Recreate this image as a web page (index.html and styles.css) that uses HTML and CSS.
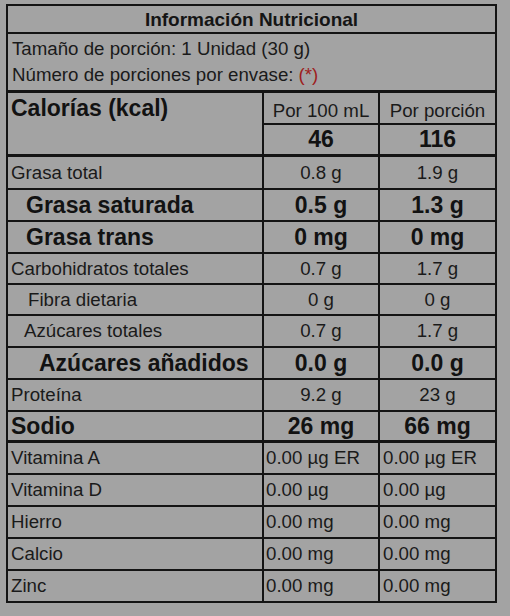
FILE: index.html
```html
<!DOCTYPE html>
<html lang="es">
<head>
<meta charset="utf-8">
<title>Información Nutricional</title>
<link rel="stylesheet" href="styles.css">
</head>
<body>
<div class="label">
  <div class="title">Información Nutricional</div>
  <div class="info">Tamaño de porción: 1 Unidad (30 g)</div>
  <div class="info last">Número de porciones por envase: <span class="red">(*)</span></div>

  <div class="cal">
    <div class="cal-name">Calorías (kcal)</div>
    <div class="head">Por 100 mL</div>
    <div class="head">Por porción</div>
    <div class="big c">46</div>
    <div class="big c">116</div>
  </div>

  <div class="row h31"><div class="n">Grasa total</div><div class="c">0.8 g</div><div class="c">1.9 g</div></div>
  <div class="row h30 big"><div class="n ind-b">Grasa saturada</div><div class="c">0.5 g</div><div class="c">1.3 g</div></div>
  <div class="row h30 big"><div class="n ind-b">Grasa trans</div><div class="c">0 mg</div><div class="c">0 mg</div></div>
  <div class="row h29"><div class="n">Carbohidratos totales</div><div class="c">0.7 g</div><div class="c">1.7 g</div></div>
  <div class="row h29"><div class="n ind-f">Fibra dietaria</div><div class="c">0 g</div><div class="c">0 g</div></div>
  <div class="row h30"><div class="n ind-a">Azúcares totales</div><div class="c">0.7 g</div><div class="c">1.7 g</div></div>
  <div class="row h30 big"><div class="n ind-aa">Azúcares añadidos</div><div class="c">0.0 g</div><div class="c">0.0 g</div></div>
  <div class="row h30"><div class="n">Proteína</div><div class="c">9.2 g</div><div class="c">23 g</div></div>
  <div class="row h28 big thick"><div class="n">Sodio</div><div class="c">26 mg</div><div class="c">66 mg</div></div>

  <div class="row h30"><div class="n">Vitamina A</div><div class="l">0.00 µg ER</div><div class="l">0.00 µg ER</div></div>
  <div class="row h30"><div class="n">Vitamina D</div><div class="l">0.00 µg</div><div class="l">0.00 µg</div></div>
  <div class="row h30"><div class="n">Hierro</div><div class="l">0.00 mg</div><div class="l">0.00 mg</div></div>
  <div class="row h30"><div class="n">Calcio</div><div class="l">0.00 mg</div><div class="l">0.00 mg</div></div>
  <div class="row h30 end"><div class="n">Zinc</div><div class="l">0.00 mg</div><div class="l">0.00 mg</div></div>
</div>
</body>
</html>
```
FILE: styles.css
```css
* { box-sizing: border-box; }

html, body {
  background: #a3a3a3;
}

body {
  margin: 0;
  font-family: "Liberation Sans", Arial, sans-serif;
  font-size: 18.7px;
  color: #1a1a1a;
}

.label {
  margin: 4px 0 0 6px;
  width: 491px;
  border: 2px solid #141414;
  background: #a3a3a3;
}

.title {
  height: 28px;
  border-bottom: 2px solid #141414;
  text-align: center;
  font-weight: bold;
  font-size: 19px;
  color: #151515;
  display: flex;
  align-items: center;
  justify-content: center;
  padding-top: 2px;
}

.info {
  height: 28px;
  padding-left: 4px;
  display: flex;
  align-items: center;
  padding-top: 1px;
}

.info.last {
  height: 31px;
  padding-top: 0;
  padding-bottom: 2px;
  border-bottom: 3px solid #141414;
}

.red { color: #9e1e1e; margin-left: 5px; }

.cal {
  display: grid;
  grid-template-columns: 256px 116px 115px;
  grid-template-rows: 32px 29px;
  height: 64px;
  border-bottom: 3px solid #141414;
}

.cal > div {
  border-right: 2px solid #141414;
  display: flex;
  align-items: center;
  justify-content: center;
}

.cal > div:nth-child(3),
.cal > div:nth-child(5) {
  border-right: 0;
}

.cal-name {
  grid-row: 1 / 3;
  align-items: flex-start !important;
  justify-content: flex-start !important;
  font-weight: bold;
  font-size: 23px;
  color: #121212;
  padding: 2px 0 0 3px;
}

.cal .head {
  border-bottom: 2px solid #141414;
  padding-top: 5px;
}

.big {
  font-weight: bold;
  font-size: 23px;
  color: #121212;
}

.row {
  display: grid;
  grid-template-columns: 256px 116px 115px;
  border-bottom: 2px solid #141414;
}

.row > div {
  border-right: 2px solid #141414;
  display: flex;
  align-items: center;
  white-space: nowrap;
}

.row > div:last-child { border-right: 0; }

.row.thick { border-bottom-width: 3px; }
.row.end { border-bottom: 0; }

.h28 { height: 31px; }
.h29 { height: 31px; }
.h30 { height: 32px; }
.h31 { height: 33px; }
.row.end.h30 { height: 30px; }

.n { padding-left: 3px; }
.c { justify-content: center; }
.l { padding-left: 2px; }
.row > .l:last-child { padding-left: 3px; }

.ind-b { padding-left: 18px; }
.ind-f { padding-left: 20px; }
.ind-a { padding-left: 16px; }
.ind-aa { padding-left: 31px; }
```
